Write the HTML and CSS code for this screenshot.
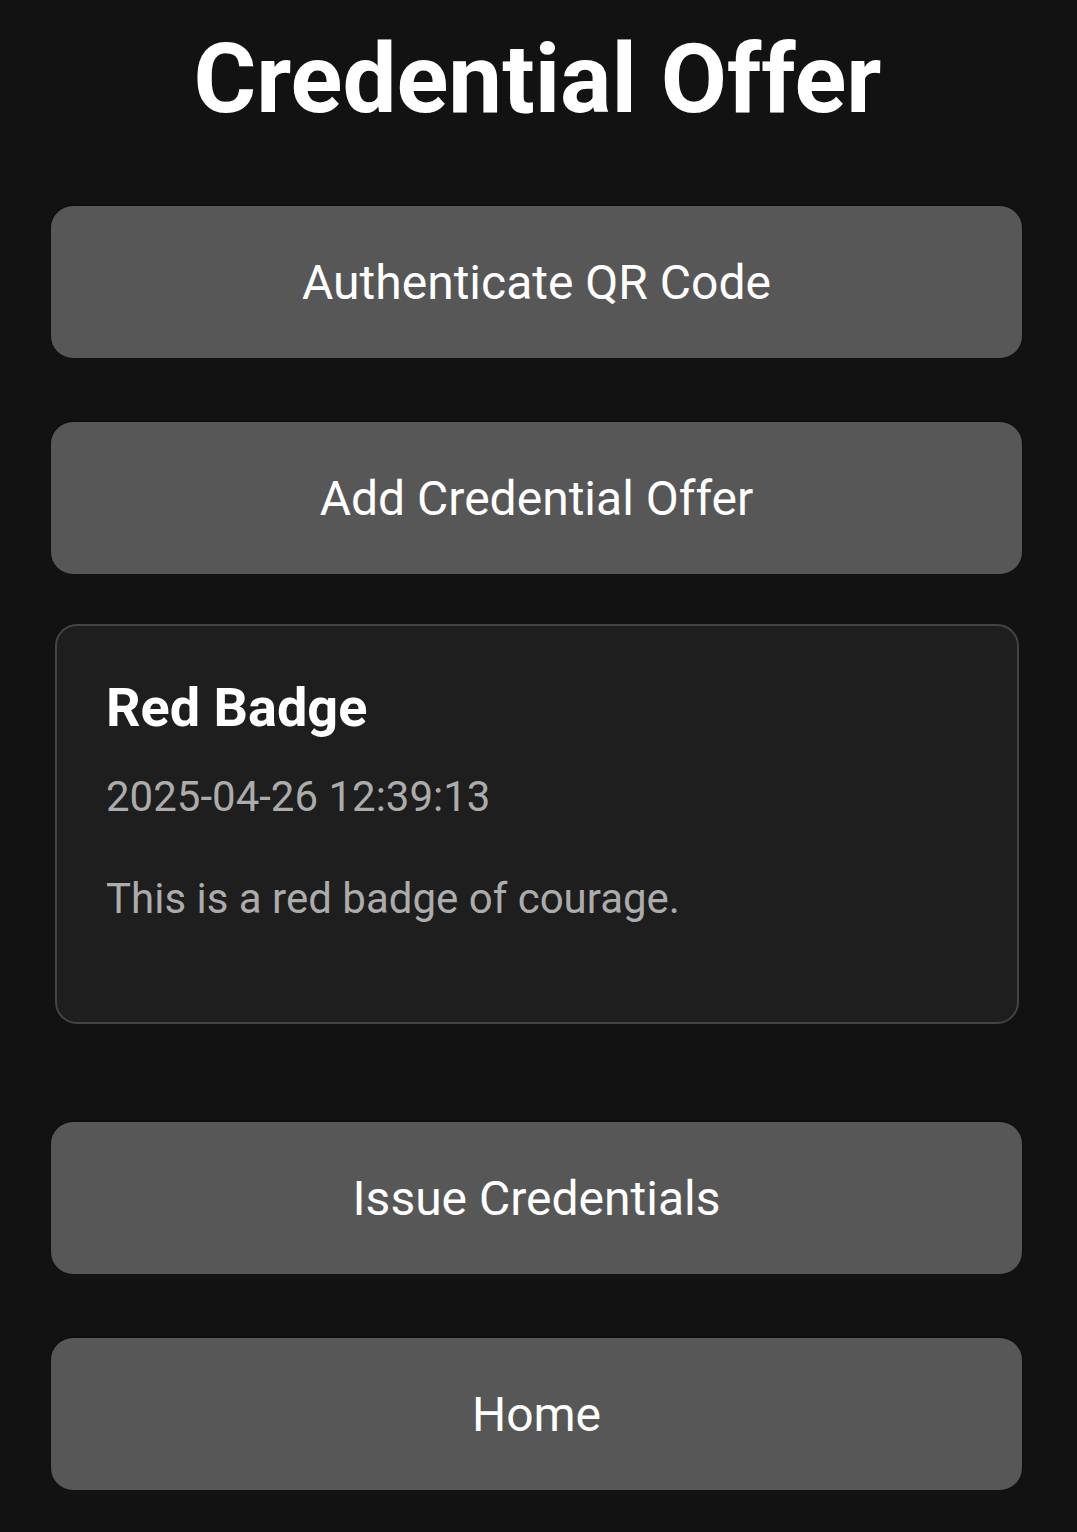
FILE: index.html
```html
<!DOCTYPE html>
<html lang="en">
<head>
    <meta charset="UTF-8">
    <meta name="viewport" content="width=device-width, initial-scale=1.0">
    <title>Credential Offer</title>
    <link rel="stylesheet" href="styles.css">
</head>
<body>

<div class="screen">
    <h1 class="pageTitle">Credential Offer</h1>

    <div class="btnMain btnFirst">Authenticate QR Code</div>
    <div class="btnMain btnSecond">Add Credential Offer</div>

    <div class="offerCard">
        <div class="offerName">Red Badge</div>
        <div class="offerDate">2025-04-26 12:39:13</div>
        <div class="offerDesc">This is a red badge of courage.</div>
    </div>

    <div class="btnMain btnIssue">Issue Credentials</div>
    <div class="btnMain btnHome">Home</div>
</div>

</body>
</html>
```

FILE: styles.css
```css
body {
    margin: 0;
    background-color: #121212;
    font-family: Roboto, "Liberation Sans", Arial, sans-serif;
    color: #fff;
}
.screen {
    display: flex;
    flex-direction: column;
    padding: 0 55px 42px 51px;
}
.pageTitle {
    margin: 19px 0 0 0;
    font-size: 96px;
    line-height: 120px;
    font-weight: 700;
    text-align: center;
    padding-left: 2px;
}
.btnMain {
    height: 152px;
    display: flex;
    align-items: center;
    justify-content: center;
    background-color: #575757;
    border-radius: 22px;
    font-size: 48px;
    color: #fff;
    cursor: pointer;
    box-shadow: 0 -1px 2px rgba(0, 0, 0, 0.4);
}
.btnFirst {
    margin-top: 67px;
}
.btnSecond {
    margin-top: 64px;
}
.btnIssue {
    margin-top: 98px;
}
.btnHome {
    margin-top: 64px;
}
.offerCard {
    margin: 50px 3px 0 4px;
    padding: 50px 50px 98px 49px;
    background-color: #1e1e1e;
    border: 2px solid #444;
    border-radius: 22px;
}
.offerName {
    font-size: 54px;
    line-height: 64px;
    font-weight: 700;
}
.offerDate {
    margin-top: 32px;
    font-size: 42px;
    line-height: 50px;
    color: #acacac;
}
.offerDesc {
    margin-top: 52px;
    font-size: 42px;
    line-height: 50px;
    color: #acacac;
}
```
